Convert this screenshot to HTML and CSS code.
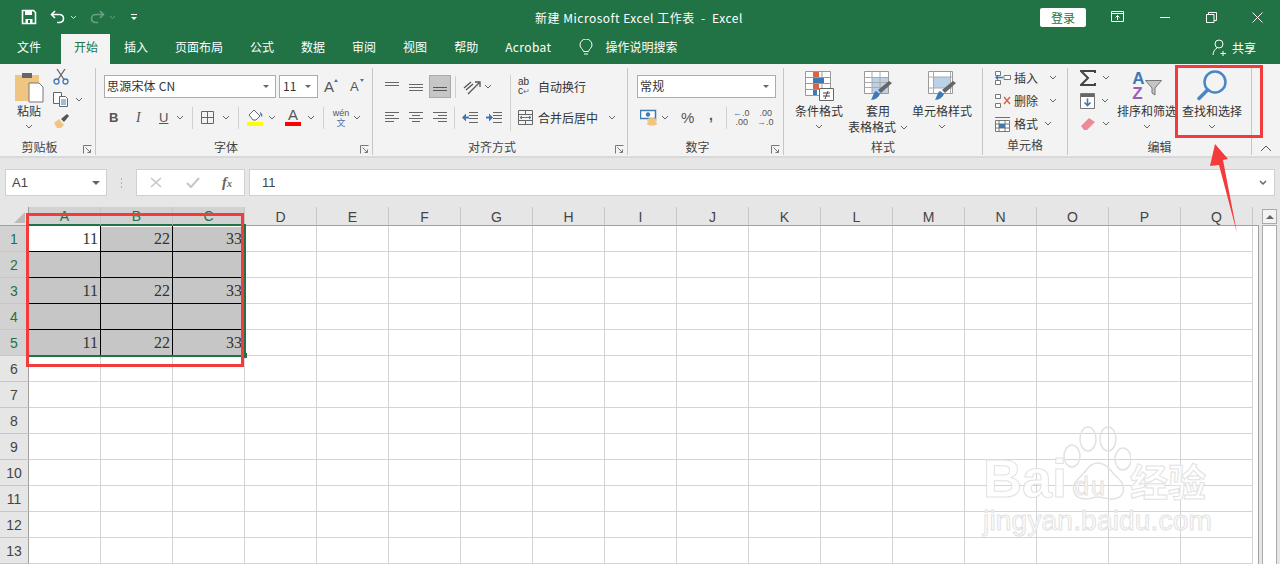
FILE: index.html
```html
<!DOCTYPE html>
<html lang="zh-CN">
  <head>
    <meta charset="UTF-8" />
    <title>新建 Microsoft Excel 工作表 - Excel</title>
    <link rel="stylesheet" href="styles.css">
  </head>
  <body>
    <svg class="defs" width="0" height="0">
      <symbol id="caret" viewBox="0 0 8 5"><path d="M1 1l3 3 3-3" fill="none" stroke="#666" stroke-width="1"/></symbol>
      <symbol id="launch" viewBox="0 0 9 9"><path d="M.5 8.5v-8h8M2.5 2.5l5 5M7.5 4.5v3h-3" fill="none" stroke="#777"/></symbol>
    </svg>

    <div class="titlebar">
      <div class="qat">
        <svg class="q-save" width="16" height="16" viewBox="0 0 16 16"><path d="M1.5 1.5h11l2 2v11h-13z" fill="none" stroke="#fff" stroke-width="1.6"/><path d="M4 2h7v4H4zM4.5 10h7v5h-7z" fill="#fff"/><path d="M7 11h2v3H7z" fill="#217346"/></svg>
        <svg class="q-undo" width="16" height="14" viewBox="0 0 16 14"><path d="M5 1L1.500 4.500 5 8M2 4.500h7c6 0 6 8 0 8H7" fill="none" stroke="#fff" stroke-width="1.6"/></svg>
        <svg class="q-c1" width="7" height="5"><path d="M1 1l2.500 2.500L6 1" fill="none" stroke="#cfe3d8"/></svg>
        <svg class="q-redo" width="16" height="14" viewBox="0 0 16 14"><path d="M11 1l3.500 3.500L11 8M14 4.500H7c-6 0-6 8 0 8h2" fill="none" stroke="#6a9f86" stroke-width="1.6"/></svg>
        <svg class="q-c2" width="7" height="5"><path d="M1 1l2.500 2.500L6 1" fill="none" stroke="#6a9f86"/></svg>
        <svg class="q-more" width="8" height="8" viewBox="0 0 8 8"><path d="M1 1h6v1H1zM1 4h6L4 7z" fill="#fff"/></svg>
      </div>
      <div class="doc-title">新建 Microsoft Excel 工作表&nbsp; -&nbsp; Excel</div>
      <button class="login">登录</button>
      <div class="win-btns">
        <svg width="14" height="12" viewBox="0 0 14 12"><path d="M.5.5h12v10H.5zM.5 2.500h12M6.500 9V4.500M4.500 6.500l2-2 2 2" fill="none" stroke="#fff"/></svg>
        <svg width="11" height="11" viewBox="0 0 11 11"><path d="M0 5.500h10" stroke="#fff"/></svg>
        <svg width="11" height="11" viewBox="0 0 11 11"><path d="M.5 2.500h7.500v8H.5zM2.500 2.500V.5h8v8H8" fill="none" stroke="#fff"/></svg>
        <svg width="11" height="11" viewBox="0 0 11 11"><path d="M.5.5l10 10M10.500.5l-10 10" stroke="#fff"/></svg>
      </div>
    </div>

    <div class="tabs">
      <div class="tab tab-file">文件</div>
      <div class="tab active">开始</div>
      <div class="tab">插入</div>
      <div class="tab">页面布局</div>
      <div class="tab">公式</div>
      <div class="tab">数据</div>
      <div class="tab">审阅</div>
      <div class="tab">视图</div>
      <div class="tab">帮助</div>
      <div class="tab tab-acrobat">Acrobat</div>
      <svg class="bulb" width="14" height="17" viewBox="0 0 14 17"><path d="M4.500 12.500C4 10 1 9 1 6a6 6 0 0 1 12 0c0 3-3 4-3.500 6.500zM5 15h4" fill="none" stroke="#fff"/></svg>
      <div class="tell">操作说明搜索</div>
      <div class="share">
        <svg width="16" height="17" viewBox="0 0 16 17"><circle cx="7" cy="5" r="4" fill="none" stroke="#fff"/><path d="M1 16c0-3 2-6 4-7M11 12v5M8.500 14.500h5.500" fill="none" stroke="#fff"/></svg>
        共享
      </div>
    </div>

    <div class="ribbon">
      <section class="group g-clip has-launch">
        <div class="g-body clip-body">
          <div class="paste">
            <svg width="30" height="32" viewBox="0 0 30 32"><path d="M1 4h24v26H1z" fill="#efc581"/><path d="M8 2h10v5H8z" fill="#666"/><path d="M15 12h10l4 4v15H15z" fill="#fff" stroke="#777"/></svg>
            <span>粘贴</span>
            <svg class="c" width="8" height="5"><use href="#caret"/></svg>
          </div>
          <div class="clip-tools">
            <svg width="16" height="16" viewBox="0 0 16 16"><circle cx="3.500" cy="12.500" r="2.500" fill="none" stroke="#3f79b5" stroke-width="1.300"/><circle cx="12.500" cy="12.500" r="2.500" fill="none" stroke="#3f79b5" stroke-width="1.300"/><path d="M5 10.500L12 0M11 10.500L4 0" stroke="#666" stroke-width="1.300"/></svg>
            <div class="ico-row">
              <svg width="16" height="15" viewBox="0 0 16 15"><path d="M.5.5h8v11h-8z" fill="#fff" stroke="#666"/><path d="M6.500 4.500h6l2 2v8h-8z" fill="#fff" stroke="#666"/><path d="M8 8h5M8 10h5M8 12h5" stroke="#3f79b5"/></svg>
              <svg class="c" width="8" height="5"><use href="#caret"/></svg>
            </div>
            <svg width="17" height="15" viewBox="0 0 17 15"><path d="M1 9l5-4 5 6-3 3H4z" fill="#efc581"/><path d="M8 5l6-5 2 2-5 6z" fill="#555"/></svg>
          </div>
        </div>
        <div class="g-label">剪贴板</div>
        <svg class="launch" width="9" height="9"><use href="#launch"/></svg>
      </section>

      <section class="group g-font has-launch">
        <div class="g-body">
          <div class="row row-top">
            <div class="select font-name"><span class="sel-text">思源宋体 CN</span><i class="tri"></i></div>
            <div class="select font-size"><span class="sel-text">11</span><i class="tri"></i></div>
            <div class="grow-btn">A<i class="up"></i></div>
            <div class="shrink-btn">A<i class="down"></i></div>
          </div>
          <div class="row row-bottom font-tools">
            <b class="fmt w-b">B</b>
            <i class="fmt w-i">I</i>
            <u class="fmt w-u">U</u>
            <svg class="c c-u" width="8" height="5"><use href="#caret"/></svg>
            <span class="vsep s1"></span>
            <svg class="bd" width="14" height="13" viewBox="0 0 14 13"><path d="M.5.500h12v12H.5zM6.500.5v12M.5 6.500h12" fill="none" stroke="#666"/></svg>
            <svg class="c c-b" width="8" height="5"><use href="#caret"/></svg>
            <span class="vsep s2"></span>
            <div class="fill-ico">
              <svg width="17" height="12" viewBox="0 0 17 12"><path d="M2 6l5-5 6 6-4 4H6z" fill="#fff" stroke="#666"/><path d="M13 3c2 1 3 3 2 5-1-1-2-2-2-5z" fill="#3f79b5"/></svg>
              <span class="swatch yellow"></span>
            </div>
            <svg class="c c-f" width="8" height="5"><use href="#caret"/></svg>
            <div class="color-ico"><span>A</span><span class="swatch red"></span></div>
            <svg class="c c-a" width="8" height="5"><use href="#caret"/></svg>
            <span class="vsep s3"></span>
            <div class="wen"><span>wén</span><span class="wen-zi">文</span></div>
            <svg class="c c-w" width="8" height="5"><use href="#caret"/></svg>
          </div>
        </div>
        <div class="g-label">字体</div>
        <svg class="launch" width="9" height="9"><use href="#launch"/></svg>
      </section>

      <section class="group g-align has-launch">
        <div class="g-body align-body">
          <div class="align-col">
            <div class="align-row">
              <svg class="al" width="14" height="10"><path d="M0 .5h14M0 3.500h14" stroke="#666"/></svg>
              <svg class="al" width="14" height="10"><path d="M0 2.500h14M0 5.500h14M0 8.500h14" stroke="#666"/></svg>
              <span class="al-on"><svg width="14" height="10"><path d="M0 5.500h14M0 8.500h14" stroke="#555"/></svg></span>
              <span class="vsep"></span>
              <svg class="orient" width="18" height="16" viewBox="0 0 18 16"><path d="M1 9l7-6M3 11l7-6M5 15L16 4M12 3h5v5" fill="none" stroke="#555" stroke-width="1.300"/></svg>
              <svg class="c" width="8" height="5"><use href="#caret"/></svg>
            </div>
            <div class="align-row row2">
              <svg class="al" width="14" height="11"><path d="M0 .5h14M0 3.500h9M0 6.500h14M0 9.500h9" stroke="#666"/></svg>
              <svg class="al" width="14" height="11"><path d="M0 .5h14M3 3.500h8M0 6.500h14M3 9.500h8" stroke="#666"/></svg>
              <svg class="al al3" width="14" height="11"><path d="M0 .5h14M5 3.500h9M0 6.500h14M5 9.500h9" stroke="#666"/></svg>
              <span class="vsep"></span>
              <svg class="ind" width="16" height="11"><path d="M7 .5h9M7 3.500h9M7 6.500h9M7 10.500h9" stroke="#666"/><path d="M0 5.500l4-4v3h3v2H4v3z" fill="#3f79b5"/></svg>
              <svg class="ind ind2" width="16" height="11"><path d="M7 .5h9M7 3.500h9M7 6.500h9M7 10.500h9" stroke="#666"/><path d="M7 5.500l-4-4v3H0v2h3v3z" fill="#3f79b5"/></svg>
            </div>
          </div>
          <span class="vsep tall"></span>
          <div class="wrap-col">
            <div class="wrap-row">
              <div class="abc"><span>ab</span><span>c<em>↵</em></span></div>
              <span>自动换行</span>
            </div>
            <div class="wrap-row merge">
              <svg width="15" height="15" viewBox="0 0 15 15"><path d="M.5.500h14v14H.5zM.5 4.500h14M.5 10.500h14M.5 5v5M7.500.5v4M7.500 10.500v4" fill="none" stroke="#666"/><path d="M2 7.500h11M4 6l-2 1.500L4 9M11 6l2 1.500L11 9" fill="none" stroke="#3f79b5"/></svg>
              <span>合并后居中</span>
              <svg class="c" width="8" height="5"><use href="#caret"/></svg>
            </div>
          </div>
        </div>
        <div class="g-label">对齐方式</div>
        <svg class="launch" width="9" height="9"><use href="#launch"/></svg>
      </section>

      <section class="group g-num has-launch">
        <div class="g-body">
          <div class="row row-top"><div class="select num-fmt"><span class="sel-text">常规</span><i class="tri"></i></div></div>
          <div class="row row-bottom num-tools">
            <svg class="money" width="18" height="17" viewBox="0 0 18 17"><path d="M.5 1.500h15v8H.5z" fill="#fff" stroke="#3f79b5" stroke-width="1.500"/><circle cx="8" cy="5.500" r="2.200" fill="#3f79b5"/><ellipse cx="12" cy="11" rx="5" ry="2" fill="#efc581"/><ellipse cx="12" cy="14.500" rx="5" ry="2" fill="#efc581"/></svg>
            <svg class="c" width="8" height="5"><use href="#caret"/></svg>
            <span class="pct">%</span>
            <span class="comma">,</span>
            <span class="vsep"></span>
            <div class="dec dec-less"><span><em>←</em>.0</span><span>.00</span></div>
            <div class="dec dec-more"><span>.00</span><span><em>→</em>.0</span></div>
          </div>
        </div>
        <div class="g-label">数字</div>
        <svg class="launch" width="9" height="9"><use href="#launch"/></svg>
      </section>

      <section class="group g-styles">
        <div class="g-body styles-body">
          <div class="big b-cond">
            <svg width="30" height="32" viewBox="0 0 30 32"><path d="M1.500 1.500h25v24h-25zM1.500 7.500h25M1.500 13.500h25M1.500 19.500h25M9.500 1.500v24M18 1.500v24" fill="#fff" stroke="#999"/><path d="M9 2h6v5H9zM9 14h6v5H9z" fill="#d9663f"/><path d="M9 8h11v5H9z" fill="#3f79b5"/><path d="M9 20h4v5H9z" fill="#3f79b5"/><path d="M15.500 18.500h14v12h-14z" fill="#fff" stroke="#666"/><path d="M19 23h7M19 26h7M24 21l-3 8" stroke="#444"/></svg>
            <span>条件格式</span>
            <svg class="c" width="8" height="5"><use href="#caret"/></svg>
          </div>
          <div class="big b-table">
            <svg width="30" height="32" viewBox="0 0 30 32"><path d="M1.500 1.500h24v22h-24z" fill="#fff" stroke="#999"/><path d="M9 7h16v16H9z" fill="#bcd0e8"/><path d="M1.500 7.500h24M1.500 12.500h24M1.500 17.500h24M9 1.500v22M17 1.500v22" stroke="#aaa" fill="none"/><path d="M8 30c4 0 8-3 9-6l-4-3c-3 2-3 6-5 9z" fill="#3f79b5"/><path d="M18 23l-3-3 11-9 3 2z" fill="#666"/></svg>
            <span>套用</span>
            <span class="sub">表格格式<svg class="c" width="8" height="5"><use href="#caret"/></svg></span>
          </div>
          <div class="big b-cell">
            <svg width="30" height="32" viewBox="0 0 30 32"><path d="M1.500 1.500h24v22h-24z" fill="#fff" stroke="#999"/><path d="M6.500 7h17v11h-17z" fill="#bcd0e8"/><path d="M1.500 7h24M1.500 18h24M6.500 1.500v22M23.500 1.500v22" stroke="#aaa" fill="none"/><path d="M8 30c4 0 8-3 9-6l-4-3c-3 2-3 6-5 9z" fill="#3f79b5"/><path d="M18 23l-3-3 11-9 3 2z" fill="#666"/></svg>
            <span>单元格样式</span>
            <svg class="c" width="8" height="5"><use href="#caret"/></svg>
          </div>
        </div>
        <div class="g-label">样式</div>
      </section>

      <section class="group g-cells">
        <div class="g-body cells-body">
          <div class="cell-row">
            <svg width="17" height="16" viewBox="0 0 17 16"><path d="M1.500 1.500h5v4h-5zM1.500 10.500h5v4h-5zM10 5.500h6.500v4H10z" fill="#fff" stroke="#777"/><path d="M2 7.500h7M4 5.500l-2 2 2 2" fill="none" stroke="#3f79b5" stroke-width="1.300"/></svg>
            <span>插入</span>
            <svg class="c" width="8" height="5"><use href="#caret"/></svg>
          </div>
          <div class="cell-row">
            <svg width="17" height="16" viewBox="0 0 17 16"><path d="M1.500 1.500h5v4h-5zM1.500 10.500h5v4h-5z" fill="#fff" stroke="#777"/><path d="M10 4l6 7M16 4l-6 7" stroke="#d9663f" stroke-width="1.500"/></svg>
            <span>删除</span>
            <svg class="c" width="8" height="5"><use href="#caret"/></svg>
          </div>
          <div class="cell-row">
            <svg width="17" height="16" viewBox="0 0 17 16"><path d="M1.500 4.500h14v11h-14zM1.500 8h14M1.500 12h14M5 4.500v11M11 4.500v11" fill="#fff" stroke="#777"/><path d="M5 8h6v4H5z" fill="#3f79b5"/><path d="M1 1.500h15" stroke="#3f79b5"/></svg>
            <span>格式</span>
            <svg class="c c-left" width="8" height="5"><use href="#caret"/></svg>
          </div>
        </div>
        <div class="g-label">单元格</div>
      </section>

      <section class="group g-edit">
        <div class="g-body edit-body">
          <div class="edit-col">
            <div class="edit-row">
              <svg width="16" height="16" viewBox="0 0 16 16"><path d="M15 3V1H1l7 7-7 7h14v-2" fill="none" stroke="#444" stroke-width="2"/></svg>
              <svg class="c" width="8" height="5"><use href="#caret"/></svg>
            </div>
            <div class="edit-row">
              <svg width="15" height="16" viewBox="0 0 15 16"><path d="M.5.500h14v15H.5z" fill="#fff" stroke="#777"/><path d="M1 1h13v3H1z" fill="#666"/><path d="M7.500 5.500v7M4.500 9.500l3 3 3-3" fill="none" stroke="#3f79b5" stroke-width="1.600"/></svg>
              <svg class="c" width="8" height="5"><use href="#caret"/></svg>
            </div>
            <div class="edit-row">
              <svg width="16" height="14" viewBox="0 0 16 14"><path d="M1 9l8-8 6 4-8 8H4z" fill="#ee8a96"/></svg>
              <svg class="c" width="8" height="5"><use href="#caret"/></svg>
            </div>
          </div>
          <div class="big b-sort">
            <div class="sort-ico">
              <div class="az"><span class="a">A</span><span class="z">Z</span></div>
              <svg class="funnel" width="17" height="16" viewBox="0 0 17 16"><path d="M.5.500h16L10 8v7l-3-2V8z" fill="#c4c4c4" stroke="#777"/></svg>
            </div>
            <span>排序和筛选</span>
            <svg class="c" width="8" height="5"><use href="#caret"/></svg>
          </div>
          <div class="big b-find">
            <svg width="30" height="32" viewBox="0 0 30 32"><circle cx="18" cy="12" r="10.500" fill="none" stroke="#4a86c5" stroke-width="2.500"/><path d="M10.500 20L2 28.500" stroke="#4a86c5" stroke-width="3.500" stroke-linecap="round"/></svg>
            <span>查找和选择</span>
            <svg class="c" width="8" height="5"><use href="#caret"/></svg>
          </div>
        </div>
        <div class="g-label">编辑</div>
      </section>

      <svg class="collapse" width="12" height="7" viewBox="0 0 12 7"><path d="M1 6l5-5 5 5" fill="none" stroke="#555"/></svg>
    </div>

    <div class="formula-bar">
      <div class="name-box"><span>A1</span><i class="tri"></i></div>
      <div class="dots"></div>
      <div class="fx-box">
        <svg class="fx-x" width="12" height="11" viewBox="0 0 12 11"><path d="M1 1l10 9M11 1L1 10" stroke="#c6c6c6" stroke-width="1.600"/></svg>
        <svg class="fx-ok" width="14" height="11" viewBox="0 0 14 11"><path d="M1 6l4 4 8-9" fill="none" stroke="#c6c6c6" stroke-width="2"/></svg>
        <span class="fx">f<small>x</small></span>
      </div>
      <div class="formula-input"><span>11</span><svg width="8" height="6" viewBox="0 0 8 6"><path d="M1 1l3 3 3-3" fill="none" stroke="#666" stroke-width="1.500"/></svg></div>
    </div>

    <div class="sheet-wrap">
      <table class="sheet">
        <thead>
          <tr>
            <th class="corner"><i></i></th>
            <th class="on">A</th><th class="on">B</th><th class="on">C</th>
            <th>D</th><th>E</th><th>F</th><th>G</th><th>H</th><th>I</th><th>J</th><th>K</th><th>L</th><th>M</th><th>N</th><th>O</th><th>P</th><th>Q</th>
          </tr>
        </thead>
        <tbody>
          <tr class="sel r1"><th>1</th><td class="cur">11</td><td>22</td><td>33</td><td></td><td></td><td></td><td></td><td></td><td></td><td></td><td></td><td></td><td></td><td></td><td></td><td></td><td></td></tr>
          <tr class="sel"><th>2</th><td></td><td></td><td></td><td></td><td></td><td></td><td></td><td></td><td></td><td></td><td></td><td></td><td></td><td></td><td></td><td></td><td></td></tr>
          <tr class="sel"><th>3</th><td>11</td><td>22</td><td>33</td><td></td><td></td><td></td><td></td><td></td><td></td><td></td><td></td><td></td><td></td><td></td><td></td><td></td><td></td></tr>
          <tr class="sel"><th>4</th><td></td><td></td><td></td><td></td><td></td><td></td><td></td><td></td><td></td><td></td><td></td><td></td><td></td><td></td><td></td><td></td><td></td></tr>
          <tr class="sel r5"><th>5</th><td>11</td><td>22</td><td>33</td><td></td><td></td><td></td><td></td><td></td><td></td><td></td><td></td><td></td><td></td><td></td><td></td><td></td><td></td></tr>
          <tr><th>6</th><td></td><td></td><td></td><td></td><td></td><td></td><td></td><td></td><td></td><td></td><td></td><td></td><td></td><td></td><td></td><td></td><td></td></tr>
          <tr><th>7</th><td></td><td></td><td></td><td></td><td></td><td></td><td></td><td></td><td></td><td></td><td></td><td></td><td></td><td></td><td></td><td></td><td></td></tr>
          <tr><th>8</th><td></td><td></td><td></td><td></td><td></td><td></td><td></td><td></td><td></td><td></td><td></td><td></td><td></td><td></td><td></td><td></td><td></td></tr>
          <tr><th>9</th><td></td><td></td><td></td><td></td><td></td><td></td><td></td><td></td><td></td><td></td><td></td><td></td><td></td><td></td><td></td><td></td><td></td></tr>
          <tr><th>10</th><td></td><td></td><td></td><td></td><td></td><td></td><td></td><td></td><td></td><td></td><td></td><td></td><td></td><td></td><td></td><td></td><td></td></tr>
          <tr><th>11</th><td></td><td></td><td></td><td></td><td></td><td></td><td></td><td></td><td></td><td></td><td></td><td></td><td></td><td></td><td></td><td></td><td></td></tr>
          <tr><th>12</th><td></td><td></td><td></td><td></td><td></td><td></td><td></td><td></td><td></td><td></td><td></td><td></td><td></td><td></td><td></td><td></td><td></td></tr>
          <tr><th>13</th><td></td><td></td><td></td><td></td><td></td><td></td><td></td><td></td><td></td><td></td><td></td><td></td><td></td><td></td><td></td><td></td><td></td></tr>
        </tbody>
      </table>
      <div class="sheet-tail"></div>
      <div class="vscroll">
        <div class="scroll-up"><i></i></div>
        <div class="scroll-track"></div>
      </div>
    </div>

    <!-- overlays: selection outline, annotations, watermark -->
    <div class="sel-right"></div>
    <div class="sel-bottom"></div>
    <div class="sel-handle"></div>
    <div class="note note-range"></div>
    <div class="note note-find"></div>
    <svg class="note-arrow" width="40" height="95" viewBox="0 0 40 95"><path d="M10 0L23 15 18 16 32 89 14 21 5 22z" fill="#f43b3b"/></svg>
    <div class="watermark">
      <svg class="paw" width="70" height="76" viewBox="0 0 70 76"><g fill="none" stroke="#e2e2e2" stroke-width="1.500"><ellipse cx="11" cy="31" rx="8" ry="11"/><ellipse cx="27" cy="14" rx="8" ry="12"/><ellipse cx="47" cy="14" rx="8" ry="12"/><ellipse cx="62" cy="34" rx="8" ry="11"/><path d="M37 38c-10 0-12 10-20 16-8 8-5 20 8 20 5 0 7-2 12-2s8 2 14 2c12 0 15-12 7-20-8-6-11-16-21-16z"/></g></svg>
      <span class="wm-bai">Bai</span>
      <span class="wm-du">du</span>
      <span class="wm-jy">经验</span>
      <span class="wm-url">jingyan.baidu.com</span>
    </div>
  </body>
</html>
```

FILE: styles.css
```css
* {
  box-sizing: border-box;
}

body {
  margin: 0;
  width: 1280px;
  height: 564px;
  overflow: hidden;
  position: relative;
  background-color: #fff;
  font-family: "Noto Sans CJK SC", "Noto Sans", sans-serif;
  font-size: 12px;
  color: #444;
}

svg {
  display: block;
  flex: none;
}

.defs {
  position: absolute;
}

/* title bar */
.titlebar {
  height: 34px;
  background-color: #217346;
  color: #fff;
  display: flex;
  align-items: center;
}

.titlebar > * {
  flex: none;
}

.qat {
  width: 504px;
  padding-left: 21px;
  display: flex;
  align-items: center;
}

.q-undo {
  margin-left: 13px;
}

.q-c1 {
  margin-left: 4px;
}

.q-redo {
  margin-left: 12px;
}

.q-c2 {
  margin-left: 4px;
}

.q-more {
  margin-left: 14px;
}

.doc-title {
  width: 270px;
  text-align: center;
  white-space: nowrap;
  letter-spacing: 0.5px;
}

.login {
  margin-left: 266px;
  width: 46px;
  height: 19px;
  border: 0;
  border-radius: 2px;
  padding: 0;
  background-color: #fff;
  color: #217346;
  font: inherit;
}

.win-btns {
  margin-left: 25px;
  display: flex;
  align-items: center;
}

.win-btns svg {
  margin-right: 35px;
}

/* tabs */
.tabs {
  height: 30px;
  background-color: #217346;
  color: #fff;
  display: flex;
  align-items: stretch;
  padding-left: 4px;
  gap: 1px;
  position: relative;
}

.tab {
  padding: 1px 13px 0;
  line-height: 24px;
}

.tab-file {
  margin-right: 6px;
}

.tab.active {
  background-color: #f3f3f3;
  color: #217346;
  padding: 1px 12px 0 13px;
}

.tab-acrobat {
  letter-spacing: 0.4px;
}

.bulb {
  margin: 5px 0 0 14px;
}

.tell {
  margin-left: 11px;
  line-height: 26px;
}

.share {
  margin-left: auto;
  margin-right: 24px;
  padding-bottom: 4px;
  display: flex;
  align-items: center;
  gap: 4px;
}

/* ribbon */
.ribbon {
  height: 94px;
  background-color: #f3f3f3;
  border-bottom: 2px solid #d9d9d9;
  display: flex;
  position: relative;
}

.group {
  position: relative;
  margin-top: 4px;
  height: 87px;
  border-right: 1px solid #c6c6c6;
  display: flex;
  flex-direction: column;
}

.g-clip { width: 96px; }
.g-font { width: 277px; }
.g-align { width: 255px; }
.g-num { width: 156px; }
.g-styles { width: 199px; }
.g-cells { width: 85px; }
.g-edit { width: 184px; }

.g-body {
  height: 68px;
  flex: none;
}

.g-label {
  text-align: center;
  line-height: 17px;
  height: 17px;
  margin-top: 2px;
}

.has-launch .g-label {
  padding-right: 16px;
}

.launch {
  position: absolute;
  right: 3px;
  bottom: 1px;
}

.collapse {
  margin: 81px 0 0 8px;
}

.row {
  display: flex;
  align-items: center;
}

.row-top {
  padding: 7px 0 0 8px;
}

.row-bottom {
  margin-top: 8px;
  height: 23px;
}

.vsep {
  display: block;
  width: 1px;
  height: 22px;
  background-color: #d0d0d0;
  flex: none;
}

/* clipboard */
.clip-body {
  display: flex;
  padding: 3px 0 0 13px;
}

.paste {
  width: 32px;
  display: flex;
  flex-direction: column;
  align-items: center;
  color: #333;
}

.paste span {
  line-height: 16px;
}

.paste .c {
  margin-top: 5px;
}

.clip-tools {
  margin-left: 8px;
  margin-top: -2px;
  display: flex;
  flex-direction: column;
  gap: 7px;
}

.ico-row {
  display: flex;
  align-items: center;
  gap: 6px;
}

/* selects */
.select {
  height: 23px;
  border: 1px solid #ababab;
  background-color: #fff;
  display: flex;
  align-items: center;
  padding: 0 6px 2px 2px;
  color: #333;
  flex: none;
}

.sel-text {
  flex: 1;
  white-space: nowrap;
  letter-spacing: 0.2px;
}

.tri {
  width: 0;
  height: 0;
  margin-top: 2px;
  border-left: 3px solid transparent;
  border-right: 3px solid transparent;
  border-top: 3px solid #666;
}

.font-name {
  width: 172px;
}

.font-size {
  width: 39px;
  margin-left: 3px;
  padding-left: 3px;
}

.grow-btn,
.shrink-btn {
  position: relative;
  font-family: "Liberation Sans", sans-serif;
  color: #555;
  width: 20px;
  line-height: 20px;
}

.grow-btn {
  margin-left: 6px;
  font-size: 15px;
  width: 24px;
}

.shrink-btn {
  font-size: 13px;
  margin-left: 2px;
}

.up,
.down {
  position: absolute;
  top: 2px;
  left: 10px;
  width: 0;
  height: 0;
  border-left: 2.500px solid transparent;
  border-right: 2.500px solid transparent;
}

.up {
  border-bottom: 3px solid #3f79b5;
}

.down {
  border-top: 3px solid #3f79b5;
}

/* font tools */
.font-tools {
  padding-left: 13px;
}

.fmt {
  width: 24px;
  font-family: "Liberation Sans", sans-serif;
  font-size: 13px;
  color: #555;
}

.w-i {
  font-family: "Liberation Serif", serif;
  font-size: 14px;
  padding-left: 3px;
}

.w-u {
  padding-left: 2px;
}

.c-u { margin-left: -5px; }
.s1 { margin-left: 8px; }
.bd { margin-left: 8px; }
.c-b { margin-left: 7px; }
.s2 { margin-left: 8px; }
.c-f { margin-left: 4px; }
.c-a { margin-left: 6px; }
.s3 { margin-left: 8px; }
.c-w { margin-left: 3px; }

.fill-ico {
  margin-left: 8px;
  width: 17px;
}

.swatch {
  display: block;
  width: 16px;
  height: 4px;
  margin-top: 1px;
}

.yellow { background-color: #ffff00; }
.red { background-color: #ff0000; }

.color-ico {
  margin-left: 9px;
  width: 16px;
  color: #555;
  font-family: "Liberation Sans", sans-serif;
  font-size: 15px;
  line-height: 12px;
  text-align: center;
}

.wen {
  margin-left: 8px;
  width: 18px;
  display: flex;
  flex-direction: column;
  align-items: center;
  font-size: 9px;
  line-height: 9px;
  color: #555;
  font-family: "Liberation Sans", sans-serif;
}

.wen-zi {
  color: #3f79b5;
  font-family: "Noto Sans CJK SC", sans-serif;
}

/* alignment */
.align-body {
  display: flex;
  padding: 7px 0 0 12px;
}

.align-col {
  width: 125px;
}

.align-row {
  display: flex;
  align-items: center;
  height: 23px;
}

.align-row.row2 {
  margin-top: 8px;
}

.align-row .al {
  margin-right: 10px;
}

.al-on {
  width: 22px;
  height: 23px;
  margin-left: -4px;
  margin-right: 4px;
  background-color: #c6c6c6;
  border: 1px solid #ababab;
  display: flex;
  align-items: center;
  justify-content: center;
}

.align-row .al3 {
  margin-right: 7px;
}

.align-row .vsep {
  margin-right: 7px;
}

.orient {
  margin-right: 3px;
}

.ind {
  margin-right: 8px;
}

.vsep.tall {
  height: 56px;
}

.wrap-col {
  padding-left: 7px;
}

.wrap-row {
  display: flex;
  align-items: center;
  height: 23px;
  gap: 5px;
  color: #333;
  white-space: nowrap;
}

.wrap-row.merge {
  margin-top: 8px;
}

.merge .c {
  margin-left: 5px;
}

.abc {
  width: 15px;
  font-family: "Liberation Sans", sans-serif;
  font-size: 10px;
  line-height: 9px;
  display: flex;
  flex-direction: column;
}

.abc em {
  font-style: normal;
  color: #3f79b5;
  font-size: 8px;
}

/* number */
.num-fmt {
  width: 139px;
  margin-left: 1px;
}

.num-tools {
  padding-left: 12px;
}

.num-tools .c {
  margin-left: 3px;
}

.pct {
  margin-left: 12px;
  width: 23px;
  font-family: "Liberation Sans", sans-serif;
  font-size: 15px;
  color: #555;
}

.comma {
  width: 22px;
  padding: 0 0 6px 5px;
  font-weight: 700;
  font-size: 14px;
  color: #555;
  line-height: 12px;
  font-family: "Liberation Sans", sans-serif;
}

.dec {
  width: 15px;
  font-family: "Liberation Sans", sans-serif;
  font-size: 9px;
  line-height: 9px;
  text-align: right;
  color: #555;
  display: flex;
  flex-direction: column;
  white-space: nowrap;
}

.dec-less {
  margin-left: 6px;
}

.dec-more {
  margin-left: 9px;
}

.dec em {
  font-style: normal;
  font-weight: 700;
  color: #3f79b5;
}

/* big buttons */
.styles-body,
.edit-body {
  display: flex;
}

.big {
  display: flex;
  flex-direction: column;
  align-items: center;
  color: #333;
  white-space: nowrap;
  position: relative;
  padding-top: 2px;
  flex: none;
}

.big span {
  line-height: 16px;
}

.big > svg:first-child,
.sort-ico {
  margin-bottom: 1px;
}

.big .c {
  margin-top: 5px;
}

.big .sub {
  display: flex;
  align-items: center;
  gap: 4px;
}

.big .sub .c {
  margin-top: 0;
}

.b-cond {
  width: 70px;
}

.b-table {
  width: 48px;
}

.b-cell {
  width: 80px;
}

.cells-body {
  margin-top: -2px;
  padding-left: 11px;
}

.cell-row {
  display: flex;
  align-items: center;
  height: 23px;
  color: #333;
  gap: 3px;
}

.cell-row .c {
  margin-left: 8px;
}

.cell-row .c-left {
  margin-left: 3px;
}

.edit-col {
  width: 46px;
  margin-top: -2px;
  padding-left: 12px;
}

.edit-row {
  height: 23px;
  display: flex;
  align-items: center;
  gap: 6px;
}

.b-sort {
  width: 60px;
  margin-left: 3px;
}

.b-find {
  width: 70px;
}

.sort-ico {
  height: 32px;
  display: flex;
  align-items: flex-start;
}

.funnel {
  margin-top: 10px;
}

.az {
  display: flex;
  flex-direction: column;
  padding-top: 1px;
  font-family: "Liberation Sans", sans-serif;
  font-weight: 700;
  font-size: 17px;
}

.az span {
  line-height: 15px;
}

.az .a { color: #3f79b5; }
.az .z { color: #9a5fb5; }

/* formula bar */
.formula-bar {
  height: 49px;
  background-color: #e6e6e6;
  padding: 11px 5px;
  display: flex;
  align-items: stretch;
}

.name-box,
.fx-box,
.formula-input {
  background-color: #fff;
  border: 1px solid #d0d0d0;
  display: flex;
  align-items: center;
  flex: none;
}

.name-box {
  width: 102px;
  padding: 0 6px;
  font-family: "Liberation Sans", sans-serif;
  font-size: 13px;
  color: #444;
  justify-content: space-between;
}

.name-box .tri {
  margin-top: 0;
  border-left-width: 4px;
  border-right-width: 4px;
  border-top-width: 4px;
}

.dots {
  width: 2px;
  margin: 8px 14px;
  background-image: radial-gradient(circle, #b0b0b0 1px, transparent 1px);
  background-size: 2px 4px;
}

.fx-box {
  width: 109px;
  padding-left: 13px;
}

.fx-ok {
  margin-left: 24px;
}

.fx {
  margin-left: 22px;
  font-family: "Liberation Serif", serif;
  font-style: italic;
  font-weight: 700;
  font-size: 15px;
  color: #666;
}

.fx small {
  font-size: 10px;
}

.formula-input {
  margin-left: 4px;
  width: 1026px;
  padding: 0 7px 0 12px;
  justify-content: space-between;
  font-family: "Liberation Sans", sans-serif;
  font-size: 13px;
}

/* sheet */
.sheet-wrap {
  display: flex;
  height: 357px;
  overflow: hidden;
  background-color: #e6e6e6;
}

.sheet {
  border-collapse: separate;
  border-spacing: 0;
  table-layout: fixed;
  width: 1253px;
  flex: none;
  align-self: flex-start;
  background-color: #fff;
}

.sheet th {
  font-weight: 400;
  font-family: "Liberation Sans", sans-serif;
  font-size: 14px;
  color: #444;
  background-color: #e6e6e6;
  border-right: 1px solid #c6c6c6;
  padding: 0;
}

.sheet thead th {
  width: 72px;
  height: 19px;
  line-height: 16px;
  padding-top: 1px;
  border-bottom: 1px solid #9f9f9f;
}

.sheet thead .corner {
  width: 29px;
  position: relative;
  border-right: 1px solid #9f9f9f;
}

.corner i {
  position: absolute;
  right: 3px;
  bottom: 2px;
  border-left: 11px solid transparent;
  border-bottom: 11px solid #bcbcbc;
}

.sheet thead .on {
  background-color: #d2d2d2;
  color: #217346;
  border-bottom: 2px solid #217346;
}

.sheet tbody th {
  width: 29px;
  border-right-color: #9f9f9f;
  border-bottom: 1px solid #c6c6c6;
}

.sheet tbody tr.sel th {
  background-color: #d2d2d2;
  color: #217346;
}

.sheet td {
  height: 26px;
  padding: 0 2px 0 0;
  border-right: 1px solid #d4d4d4;
  border-bottom: 1px solid #d4d4d4;
  text-align: right;
  font-family: "Liberation Serif", serif;
  font-size: 16px;
  color: #333;
}

.sel td:nth-child(-n+4) {
  background-color: #c6c6c6;
  border-color: #000;
}

.sel td:nth-child(4) {
  border-right: 0;
  padding-right: 3px;
  box-shadow: inset -1px 0 0 #fff;
}

.r5 td:nth-child(-n+4) {
  border-bottom-color: #fff;
}

.r1 td:nth-child(-n+4) {
  box-shadow: inset 0 1px 0 #fff;
}

.r1 td:nth-child(4) {
  box-shadow: inset -1px 1px 0 #fff;
}

.sel td.cur {
  background-color: #fff;
}

.sheet-tail {
  width: 6px;
  margin-top: 18px;
  flex: none;
  background-color: #fff;
  border-top: 1px solid #9f9f9f;
  border-right: 1px solid #9f9f9f;
}

.vscroll {
  margin-left: 3px;
  width: 15px;
  flex: none;
  padding-top: 2px;
  display: flex;
  flex-direction: column;
}

.scroll-up {
  height: 15px;
  background-color: #f3f3f3;
  border: 1px solid #ababab;
  display: flex;
  align-items: center;
  justify-content: center;
}

.scroll-up i {
  border-left: 4px solid transparent;
  border-right: 4px solid transparent;
  border-bottom: 4px solid #666;
}

.scroll-track {
  flex: 1;
  margin-top: 1px;
  background-color: #fff;
  border: 1px solid #ababab;
  border-bottom: 0;
}

/* selection outline */
.sel-right {
  position: absolute;
  left: 244px;
  top: 224px;
  width: 2px;
  height: 131px;
  background-color: #217346;
}

.sel-bottom {
  position: absolute;
  left: 29px;
  top: 355px;
  width: 215px;
  height: 2px;
  background-color: #217346;
}

.sel-handle {
  position: absolute;
  left: 243px;
  top: 353px;
  width: 4px;
  height: 5px;
  background-color: #217346;
}

/* red annotations */
.note {
  position: absolute;
  border: 3px solid #f43b3b;
}

.note-range {
  left: 26px;
  top: 213px;
  width: 218px;
  height: 154px;
}

.note-find {
  left: 1175px;
  top: 65px;
  width: 88px;
  height: 73px;
}

.note-arrow {
  position: absolute;
  left: 1205px;
  top: 144px;
}

/* watermark */
.watermark {
  position: absolute;
  left: 983px;
  top: 425px;
  width: 240px;
  height: 115px;
  color: rgba(255, 255, 255, 0.85);
  font-family: "Liberation Sans", sans-serif;
  -webkit-text-stroke: 1px #e2e2e2;
}

.paw {
  position: absolute;
  left: 78px;
  top: 0;
}

.watermark span {
  position: absolute;
  white-space: nowrap;
}

.wm-bai {
  left: 0;
  top: 26px;
  font-size: 54px;
  font-weight: 700;
  line-height: 54px;
}

.wm-du {
  left: 92px;
  top: 48px;
  font-size: 25px;
  letter-spacing: 2px;
  line-height: 26px;
}

.wm-jy {
  left: 147px;
  top: 36px;
  font-family: "Noto Sans CJK SC", sans-serif;
  font-size: 38px;
  font-weight: 700;
  line-height: 38px;
}

.wm-url {
  left: 0;
  top: 80px;
  font-size: 28px;
  letter-spacing: 0.2px;
  line-height: 32px;
}
```
